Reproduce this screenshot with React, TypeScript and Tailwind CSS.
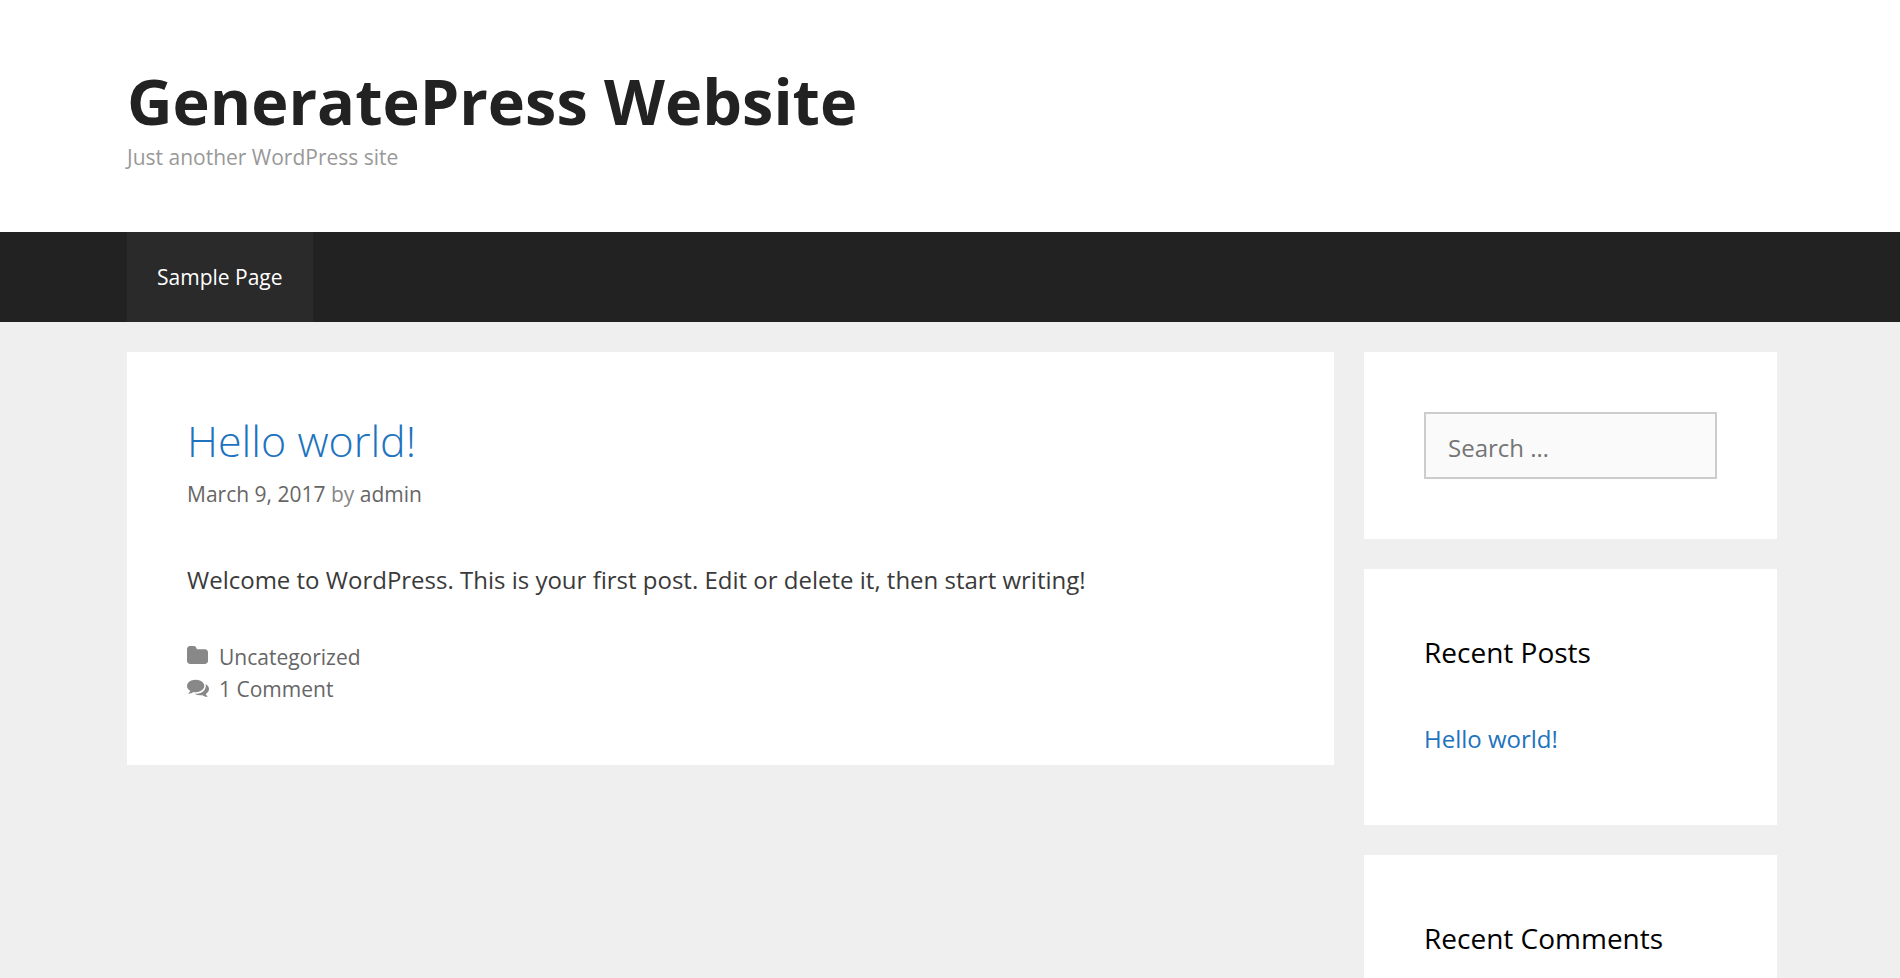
import type { ReactNode } from "react";

function Container({ children, className = "" }: { children: ReactNode; className?: string }) {
  return (
    <div className="pl-1">
      <div className={`mx-auto max-w-[1650px] ${className}`}>{children}</div>
    </div>
  );
}

function Widget({ title, children }: { title?: string; children?: ReactNode }) {
  return (
    <aside className="bg-white p-[60px]">
      {title && <h2 className="mb-[45px] text-[28px] leading-[46px] text-black">{title}</h2>}
      {children}
    </aside>
  );
}

function FolderIcon() {
  return (
    <svg viewBox="0 0 1664 1408" className="h-[18px] w-[21px] shrink-0" fill="currentColor" aria-hidden="true">
      <path d="M1664 480v704q0 92-66 158t-158 66H224q-92 0-158-66T0 1184V224Q0 132 66 66T224 0h320q92 0 158 66t66 158v32h672q92 0 158 66t66 158z" />
    </svg>
  );
}

function CommentsIcon() {
  return (
    <svg viewBox="0 -128 1792 1536" className="h-[19px] w-[22px] shrink-0" fill="currentColor" aria-hidden="true">
      <path d="M1408 512q0 139-94 257t-256.500 186.500T704 1024q-86 0-176-16-124 88-278 128-36 9-86 16h-3q-11 0-20.500-8t-11.500-21q-1-3-1-6.500t.5-6.500 2-6l2.500-5 3.500-5.500 4-5 4.500-5 4-4.500q5-6 23-25t26-29.500 22.500-29 25-38.500 20.500-44q-124-72-195-177T0 512q0-139 94-257T350.500 68.500 704 0t353.500 68.500T1314 255t94 257zm384 256q0 120-71 224.500T1526 1169q10 24 20.500 44t25 38.500 22.500 29 26 29.500 23 25q1 1 4 4.500t4.500 5 4 5 3.500 5.500l2.500 5 2 6 .5 6.500-1 6.500q-3 14-13 22t-22 7q-50-7-86-16-154-40-278-128-90 16-176 16-271 0-472-132 58 4 88 4 161 0 309-45t264-129q125-92 192-212t67-254q0-77-23-152 129 71 204 178t75 230z" />
    </svg>
  );
}

export default function App() {
  return (
    <div className="min-h-screen bg-[#efefef] font-['Open_Sans','Noto_Sans',sans-serif] text-[24px] text-[#3a3a3a]">
      <header className="bg-white">
        <Container className="py-[60px]">
          <p className="text-[63px] leading-[82px] font-bold text-[#222222]">
            <a href="#">GeneratePress Website</a>
          </p>
          <p className="text-[21px] leading-[30px] text-[#999999]">Just another WordPress site</p>
        </Container>
      </header>

      <nav className="bg-[#222222]">
        <Container>
          <ul className="flex">
            <li>
              <a href="#" className="block bg-[#2a2a2a] px-[30px] text-[21px] leading-[90px] text-white">
                Sample Page
              </a>
            </li>
          </ul>
        </Container>
      </nav>

      <Container className="flex items-start gap-[30px] pt-[30px]">
        <main className="min-w-0 flex-1">
          <article className="bg-white p-[60px]">
            <h2 className="mb-2 text-[43px] leading-[58px] font-light text-[#1e73be]">
              <a href="#">Hello world!</a>
            </h2>
            <div className="text-[21px] leading-[32px] text-[#888888]">
              <a href="#" className="text-[#666666]">March 9, 2017</a> by{" "}
              <a href="#" className="text-[#666666]">admin</a>
            </div>
            <p className="mt-[51px] leading-[38px]">
              Welcome to WordPress. This is your first post. Edit or delete it, then start writing!
            </p>
            <footer className="mt-[42px] text-[21px] leading-[32px] text-[#888888]">
              <div className="flex items-center">
                <span className="flex w-8 pb-1"><FolderIcon /></span>
                <a href="#" className="text-[#666666]">Uncategorized</a>
              </div>
              <div className="flex items-center">
                <span className="flex w-8 pb-1"><CommentsIcon /></span>
                <a href="#" className="text-[#666666]">1 Comment</a>
              </div>
            </footer>
          </article>
        </main>

        <div className="flex w-[413px] shrink-0 flex-col gap-[30px]">
          <Widget>
            <form>
              <input
                type="search"
                aria-label="Search for:"
                placeholder="Search …"
                className="block h-[67px] w-full border-2 border-[#cccccc] bg-[#fafafa] px-[22px] pt-[3px] placeholder:text-[#757575]"
              />
            </form>
          </Widget>
          <Widget title="Recent Posts">
            <ul>
              <li className="mb-[7px] leading-[38px]">
                <a href="#" className="text-[#1e73be]">Hello world!</a>
              </li>
            </ul>
          </Widget>
          <Widget title="Recent Comments" />
        </div>
      </Container>
    </div>
  );
}
